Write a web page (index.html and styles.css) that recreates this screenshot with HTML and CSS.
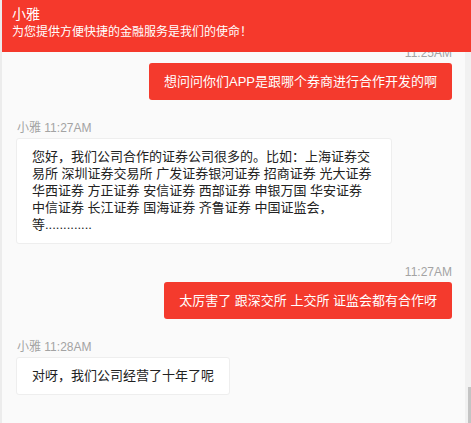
FILE: index.html
```html
<!DOCTYPE html>
<html lang="zh-CN">
<head>
<meta charset="utf-8">
<title>小雅</title>
<link rel="stylesheet" href="styles.css">
</head>
<body>
<div class="app">
  <header class="header">
    <div class="header-title">小雅</div>
    <div class="header-sub">为您提供方便快捷的金融服务是我们的使命！</div>
  </header>
  <div class="main">
    <div class="chat">
      <div class="list">
        <div class="msg me">
          <div class="meta">11:25AM</div>
          <div class="bubble red">想问问你们APP是跟哪个券商进行合作开发的啊</div>
        </div>
        <div class="msg bot">
          <div class="meta">小雅 11:27AM</div>
          <div class="bubble white">您好，我们公司合作的证券公司很多的。比如：上海证券交易所 深圳证券交易所 广发证券银河证券 招商证券 光大证券 华西证券 方正证券 安信证券 西部证券 申银万国 华安证券 中信证券 长江证券 国海证券 齐鲁证券 中国证监会，<br>等.............</div>
        </div>
        <div class="msg me">
          <div class="meta">11:27AM</div>
          <div class="bubble red">太厉害了 跟深交所 上交所 证监会都有合作呀</div>
        </div>
        <div class="msg bot">
          <div class="meta">小雅 11:28AM</div>
          <div class="bubble white">对呀，我们公司经营了十年了呢</div>
        </div>
      </div>
    </div>
    <div class="scrollbar"><div class="thumb"></div></div>
  </div>
</div>
</body>
</html>
```

FILE: styles.css
```css
html, body {
  margin: 0;
  padding: 0;
}
body {
  background: #ececec;
  font-family: "Liberation Sans", "Noto Sans CJK SC", sans-serif;
}
.app {
  margin-left: 2px;
  height: 423px;
  display: flex;
  flex-direction: column;
  overflow: hidden;
}
.header {
  height: 52px;
  flex: none;
  box-sizing: border-box;
  background: #f5392c;
  color: #fff;
  padding: 4px 10px 0;
  position: relative;
  z-index: 1;
}
.header-title {
  font-size: 14px;
  line-height: 20px;
}
.header-sub {
  font-size: 12px;
  line-height: 16px;
}
.main {
  flex: 1;
  display: flex;
  min-height: 0;
}
.chat {
  flex: 1;
  background: #fafafa;
  overflow: hidden;
}
.list {
  margin-top: -7px;
  padding: 0 13px 0 14px;
}
.msg {
  display: flex;
  flex-direction: column;
  margin-bottom: 20px;
}
.msg.me {
  align-items: flex-end;
}
.msg.bot {
  align-items: flex-start;
}
.meta {
  font-size: 12px;
  line-height: 16px;
  color: #a3a3a3;
  margin-bottom: 2px;
  padding-left: 1px;
}
.bubble {
  box-sizing: border-box;
  max-width: 376px;
  font-size: 13px;
  line-height: 17px;
  padding: 10px 15px;
  border-radius: 3px;
}
.bubble.red {
  background: #f43a2d;
  color: #fff;
}
.bubble.white {
  background: #fff;
  color: #222;
  border: 1px solid #eeeeee;
  padding: 9px 15px 10px;
}
.scrollbar {
  width: 6px;
  flex: none;
  background: #f1f1f1;
  display: flex;
  flex-direction: column;
  justify-content: flex-end;
  align-items: flex-end;
}
.thumb {
  width: 3px;
  height: 36px;
  background: #c4c4c4;
}
```
